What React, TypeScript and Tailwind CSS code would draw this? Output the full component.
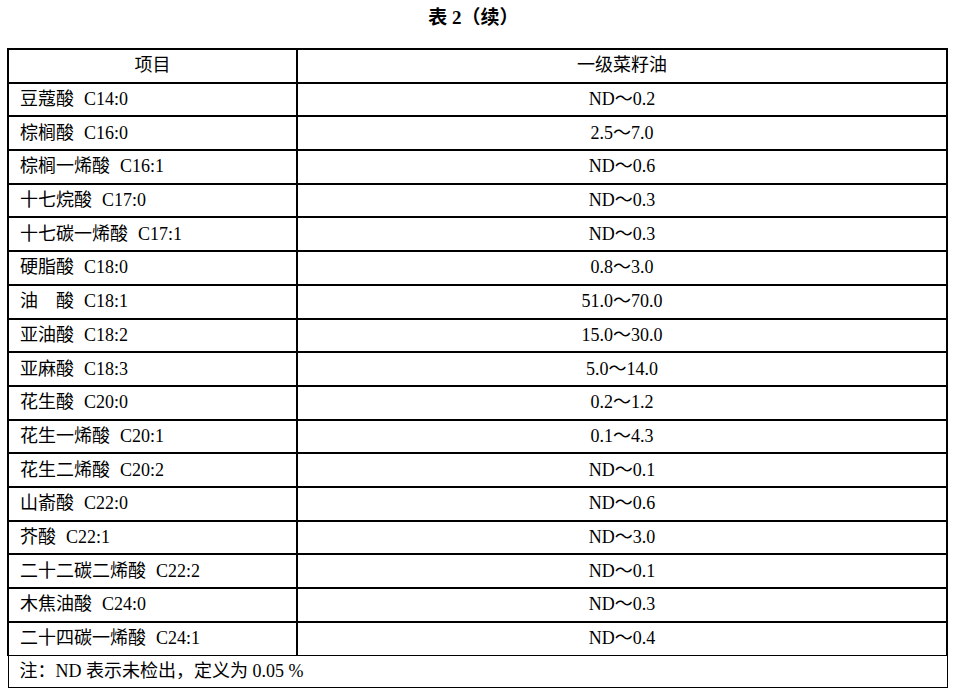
import React from 'react';

const rows: { name: string; code: string; value: string }[] = [
  { name: '豆蔻酸', code: 'C14:0', value: 'ND～0.2' },
  { name: '棕榈酸', code: 'C16:0', value: '2.5～7.0' },
  { name: '棕榈一烯酸', code: 'C16:1', value: 'ND～0.6' },
  { name: '十七烷酸', code: 'C17:0', value: 'ND～0.3' },
  { name: '十七碳一烯酸', code: 'C17:1', value: 'ND～0.3' },
  { name: '硬脂酸', code: 'C18:0', value: '0.8～3.0' },
  { name: '油\u3000酸', code: 'C18:1', value: '51.0～70.0' },
  { name: '亚油酸', code: 'C18:2', value: '15.0～30.0' },
  { name: '亚麻酸', code: 'C18:3', value: '5.0～14.0' },
  { name: '花生酸', code: 'C20:0', value: '0.2～1.2' },
  { name: '花生一烯酸', code: 'C20:1', value: '0.1～4.3' },
  { name: '花生二烯酸', code: 'C20:2', value: 'ND～0.1' },
  { name: '山嵛酸', code: 'C22:0', value: 'ND～0.6' },
  { name: '芥酸', code: 'C22:1', value: 'ND～3.0' },
  { name: '二十二碳二烯酸', code: 'C22:2', value: 'ND～0.1' },
  { name: '木焦油酸', code: 'C24:0', value: 'ND～0.3' },
  { name: '二十四碳一烯酸', code: 'C24:1', value: 'ND～0.4' },
];

const font = "font-['Liberation_Serif','Noto_Sans_CJK_SC',serif]";

export default function App() {
  return (
    <div className={`w-[957px] h-[698px] bg-white text-black ${font}`}>
      <div className="h-[48px] pt-[5px] text-center text-[19px] font-bold leading-[26px] pr-[10px]">
        表 2（续）
      </div>

      <div className="ml-[7px] w-[941px]">
        <div className="border-t-2 border-x-2 border-black">
          {/* header */}
          <div className="flex h-[33.7px] border-b-2 border-black text-[18px]">
            <div className="w-[289px] border-r-2 border-black flex items-center justify-center">项目</div>
            <div className="flex-1 flex items-center justify-center">一级菜籽油</div>
          </div>

          {rows.map((r, i) => (
            <div
              key={r.code}
              className={`flex text-[18px] border-black ${
                i === rows.length - 1 ? 'h-[33px] border-b' : 'h-[33.7px] border-b-2'
              }`}
            >
              <div className="w-[289px] border-r-2 border-black flex items-center pl-[11px]">
                <span>{r.name}</span>
                <span className="ml-[10px]">{r.code}</span>
              </div>
              <div className="flex-1 flex items-center justify-center">{r.value}</div>
            </div>
          ))}
        </div>

        <div className="h-[32px] border-x border-b border-black ml-[0.5px] mr-[0.5px] flex items-center pl-[11px] text-[18px]">
          注：ND 表示未检出，定义为 0.05 %
        </div>
      </div>
    </div>
  );
}
